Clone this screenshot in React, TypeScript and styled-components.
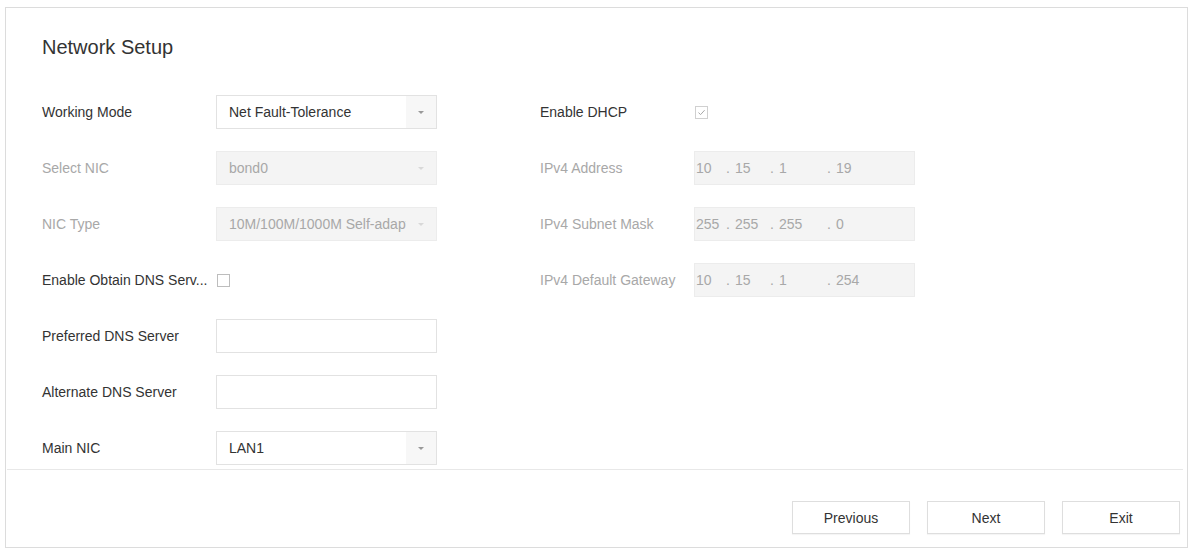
import styled, { createGlobalStyle } from "styled-components";

const GlobalStyle = createGlobalStyle`
  html, body {
    margin: 0;
    padding: 0;
    background: #fff;
  }
  body {
    font-family: "Liberation Sans", Arial, sans-serif;
    color: #333;
  }
`;

const Frame = styled.div`
  box-sizing: border-box;
  width: 1183px;
  height: 541px;
  margin: 7px 0 0 5px;
  border: 1px solid #dcdcdc;
  display: flex;
  flex-direction: column;
  background: #fff;
`;

const Content = styled.div`
  flex: 1;
  padding: 27px 0 0 36px;
`;

const Title = styled.h1`
  margin: 0 0 36px;
  font-size: 20px;
  line-height: 24px;
  font-weight: normal;
  color: #333;
`;

const Columns = styled.div`
  display: flex;
  gap: 103px;
`;

const FieldColumn = styled.div`
  display: flex;
  flex-direction: column;
  gap: 22px;
`;

const Row = styled.div`
  display: flex;
  align-items: center;
  height: 34px;
`;

const Label = styled.span<{ $width: number; $disabled?: boolean }>`
  width: ${(p) => p.$width}px;
  flex-shrink: 0;
  font-size: 14px;
  color: ${(p) => (p.$disabled ? "#a8a8a8" : "#333")};
  white-space: nowrap;
`;

const SelectBox = styled.div<{ $disabled?: boolean }>`
  box-sizing: border-box;
  width: 221px;
  height: 34px;
  display: flex;
  align-items: center;
  border: 1px solid ${(p) => (p.$disabled ? "#ececec" : "#e2e2e2")};
  background: ${(p) => (p.$disabled ? "#f4f4f4" : "#fff")};
`;

const SelectValue = styled.span<{ $disabled?: boolean }>`
  flex: 1;
  padding-left: 12px;
  font-size: 14px;
  color: ${(p) => (p.$disabled ? "#a8a8a8" : "#333")};
  white-space: nowrap;
  overflow: hidden;
`;

const ArrowBox = styled.span<{ $disabled?: boolean }>`
  width: 30px;
  height: 100%;
  display: flex;
  align-items: center;
  justify-content: center;
  background: ${(p) => (p.$disabled ? "#f4f4f4" : "#f7f7f7")};

  &::after {
    content: "";
    border-left: 3px solid transparent;
    border-right: 3px solid transparent;
    border-top: 3px solid ${(p) => (p.$disabled ? "#d8d8d8" : "#999")};
  }
`;

const TextBox = styled.div`
  box-sizing: border-box;
  width: 221px;
  height: 34px;
  border: 1px solid #e2e2e2;
  background: #fff;
`;

const IpBox = styled.div`
  box-sizing: border-box;
  width: 221px;
  height: 34px;
  display: flex;
  align-items: center;
  padding-left: 1px;
  border: 1px solid #ececec;
  background: #f4f4f4;
  font-size: 14px;
  color: #a8a8a8;
`;

const Octet = styled.span<{ $width: number }>`
  width: ${(p) => p.$width}px;
  flex-shrink: 0;
`;

const Dot = styled.span`
  width: 9px;
  flex-shrink: 0;
`;

const CheckBox = styled.span<{ $checked?: boolean }>`
  box-sizing: border-box;
  width: 13px;
  height: 13px;
  display: inline-flex;
  align-items: center;
  justify-content: center;
  border: 1px solid ${(p) => (p.$checked ? "#d0d0d0" : "#bdbdbd")};
  background: #fff;
`;

const Divider = styled.div`
  height: 1px;
  margin: 0 4px 0 1px;
  background: #e8e8e8;
`;

const Footer = styled.div`
  height: 77px;
  display: flex;
  justify-content: flex-end;
  align-items: flex-start;
  gap: 17px;
  padding: 31px 7px 0 0;
  box-sizing: border-box;
`;

const Button = styled.button`
  width: 118px;
  height: 33px;
  border: 1px solid #dedede;
  background: #fff;
  font-family: "Liberation Sans", Arial, sans-serif;
  font-size: 14px;
  color: #333;
  box-shadow: 0 1px 1px rgba(0, 0, 0, 0.04);
  cursor: pointer;
`;

const Select = ({ value, disabled }: { value: string; disabled?: boolean }) => (
  <SelectBox $disabled={disabled}>
    <SelectValue $disabled={disabled}>{value}</SelectValue>
    <ArrowBox $disabled={disabled} />
  </SelectBox>
);

const IpField = ({ octets }: { octets: string[] }) => (
  <IpBox>
    <Octet $width={30}>{octets[0]}</Octet>
    <Dot>.</Dot>
    <Octet $width={35}>{octets[1]}</Octet>
    <Dot>.</Dot>
    <Octet $width={48}>{octets[2]}</Octet>
    <Dot>.</Dot>
    <Octet $width={40}>{octets[3]}</Octet>
  </IpBox>
);

const CheckMark = () => (
  <svg width="9" height="9" viewBox="0 0 9 9">
    <path d="M1.5 4.6 L3.6 6.6 L7.6 2.2" fill="none" stroke="#a8a8a8" strokeWidth="1" />
  </svg>
);

const App = () => {
  return (
    <>
      <GlobalStyle />
      <Frame>
        <Content>
          <Title>Network Setup</Title>
          <Columns>
            <FieldColumn>
              <Row>
                <Label $width={174}>Working Mode</Label>
                <Select value="Net Fault-Tolerance" />
              </Row>
              <Row>
                <Label $width={174} $disabled>Select NIC</Label>
                <Select value="bond0" disabled />
              </Row>
              <Row>
                <Label $width={174} $disabled>NIC Type</Label>
                <Select value="10M/100M/1000M Self-adapt" disabled />
              </Row>
              <Row>
                <Label $width={175}>Enable Obtain DNS Serv...</Label>
                <CheckBox />
              </Row>
              <Row>
                <Label $width={174}>Preferred DNS Server</Label>
                <TextBox />
              </Row>
              <Row>
                <Label $width={174}>Alternate DNS Server</Label>
                <TextBox />
              </Row>
              <Row>
                <Label $width={174}>Main NIC</Label>
                <Select value="LAN1" />
              </Row>
            </FieldColumn>
            <FieldColumn>
              <Row>
                <Label $width={155}>Enable DHCP</Label>
                <CheckBox $checked>
                  <CheckMark />
                </CheckBox>
              </Row>
              <Row>
                <Label $width={154} $disabled>IPv4 Address</Label>
                <IpField octets={["10", "15", "1", "19"]} />
              </Row>
              <Row>
                <Label $width={154} $disabled>IPv4 Subnet Mask</Label>
                <IpField octets={["255", "255", "255", "0"]} />
              </Row>
              <Row>
                <Label $width={154} $disabled>IPv4 Default Gateway</Label>
                <IpField octets={["10", "15", "1", "254"]} />
              </Row>
            </FieldColumn>
          </Columns>
        </Content>
        <Divider />
        <Footer>
          <Button>Previous</Button>
          <Button>Next</Button>
          <Button>Exit</Button>
        </Footer>
      </Frame>
    </>
  );
};

export default App;
